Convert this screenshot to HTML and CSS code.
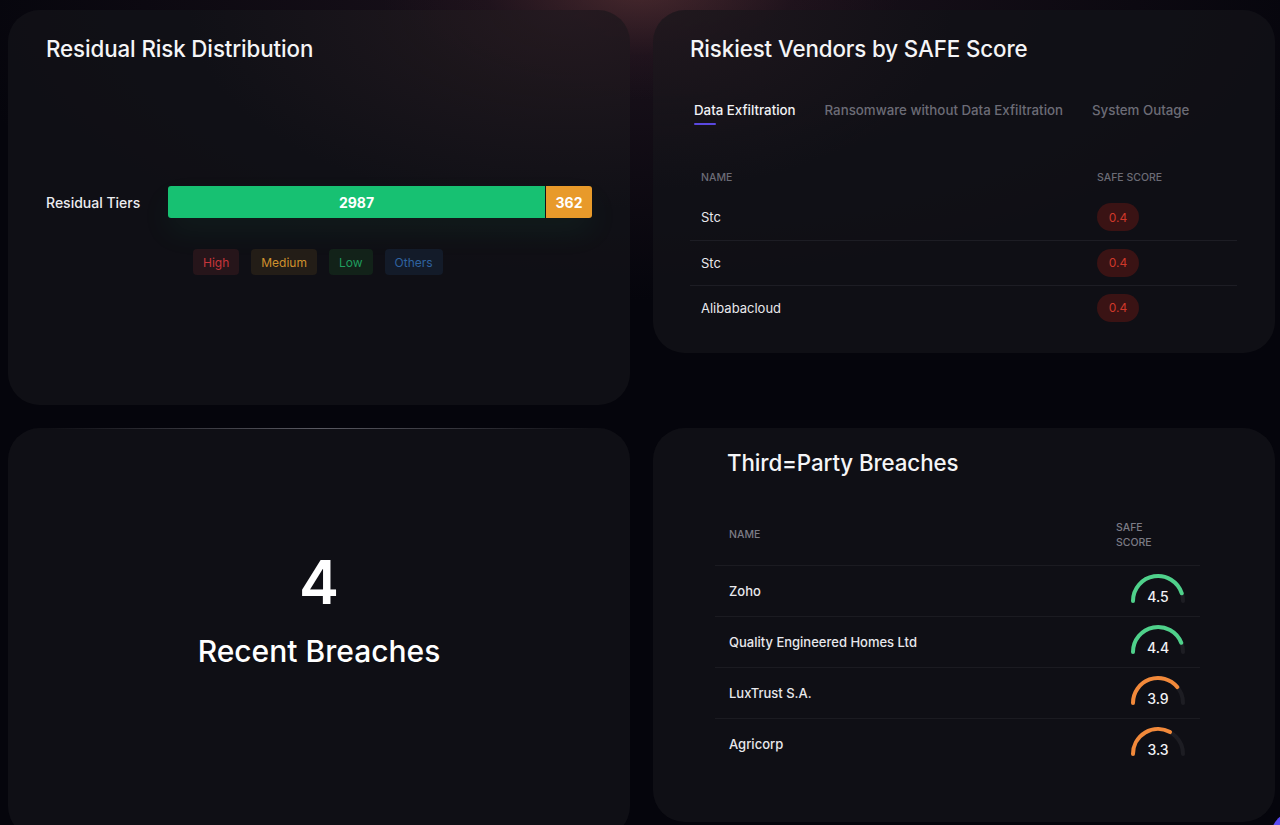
FILE: index.html
```html
<!DOCTYPE html>
<html lang="en">
<head>
<meta charset="utf-8">
<title>Risk Dashboard</title>
<link rel="stylesheet" href="styles.css">
</head>
<body>
<main class="grid">
  <section class="card card-dist">
    <h2 class="card-title">Residual Risk Distribution</h2>
    <div class="tier-row">
      <span class="tier-label">Residual Tiers</span>
      <div class="bar">
        <div class="seg seg-low" style="width: 377px">2987</div>
        <div class="seg seg-med" style="width: 46px">362</div>
      </div>
    </div>
    <div class="legend">
      <span class="chip chip-high">High</span>
      <span class="chip chip-med">Medium</span>
      <span class="chip chip-low">Low</span>
      <span class="chip chip-other">Others</span>
    </div>
  </section>

  <section class="card card-vendors">
    <h2 class="card-title">Riskiest Vendors by SAFE Score</h2>
    <nav class="tabs">
      <span class="tab active">Data Exfiltration</span>
      <span class="tab">Ransomware without Data Exfiltration</span>
      <span class="tab">System Outage</span>
    </nav>
    <table class="vtable">
      <thead>
        <tr><th class="col-name">Name</th><th class="col-score">Safe Score</th></tr>
      </thead>
      <tbody>
        <tr><td>Stc</td><td><span class="pill">0.4</span></td></tr>
        <tr><td>Stc</td><td><span class="pill">0.4</span></td></tr>
        <tr><td>Alibabacloud</td><td><span class="pill">0.4</span></td></tr>
      </tbody>
    </table>
  </section>

  <section class="card card-recent">
    <div class="big-num">4</div>
    <div class="big-label">Recent Breaches</div>
  </section>

  <section class="card card-breaches">
    <h2 class="card-title">Third=Party Breaches</h2>
    <table class="btable">
      <thead>
        <tr><th class="col-name">Name</th><th class="col-score"><span class="wrap">Safe Score</span></th></tr>
      </thead>
      <tbody>
        <tr>
          <td>Zoho</td>
          <td><div class="gauge"><svg viewBox="0 0 56 34" width="56" height="34"><path class="track" d="M3 28 A25 25 0 0 1 53 28"/><path class="val green" d="M3 28 A25 25 0 0 1 51.78 20.27"/></svg><span class="gnum">4.5</span></div></td>
        </tr>
        <tr>
          <td>Quality Engineered Homes Ltd</td>
          <td><div class="gauge"><svg viewBox="0 0 56 34" width="56" height="34"><path class="track" d="M3 28 A25 25 0 0 1 53 28"/><path class="val green" d="M3 28 A25 25 0 0 1 51.24 18.8"/></svg><span class="gnum">4.4</span></div></td>
        </tr>
        <tr>
          <td>LuxTrust S.A.</td>
          <td><div class="gauge"><svg viewBox="0 0 56 34" width="56" height="34"><path class="track" d="M3 28 A25 25 0 0 1 53 28"/><path class="val orange" d="M3 28 A25 25 0 0 1 47.26 12.06"/></svg><span class="gnum">3.9</span></div></td>
        </tr>
        <tr>
          <td>Agricorp</td>
          <td><div class="gauge"><svg viewBox="0 0 56 34" width="56" height="34"><path class="track" d="M3 28 A25 25 0 0 1 53 28"/><path class="val orange" d="M3 28 A25 25 0 0 1 40.05 6.09"/></svg><span class="gnum">3.3</span></div></td>
        </tr>
      </tbody>
    </table>
  </section>
</main>
<div class="fab"></div>
</body>
</html>
```

FILE: styles.css
```css
* { box-sizing: border-box; }

html, body {
  margin: 0;
  height: 100%;
  overflow: hidden;
}

body {
  font-family: Inter, "Noto Sans", "Liberation Sans", sans-serif;
  color: #f2f2f5;
  background:
    radial-gradient(ellipse 260px 110px at 640px -10px, rgba(110, 60, 60, 0.5), rgba(60, 30, 40, 0.2) 60%, transparent 100%),
    radial-gradient(ellipse 700px 300px at 640px 0px, rgba(45, 28, 40, 0.6), transparent 100%),
    #05050c;
}

.grid {
  display: grid;
  grid-template-columns: 622px 622px;
  column-gap: 23px;
  row-gap: 23px;
  padding: 10px 5px 0 8px;
  align-items: start;
}

.card {
  position: relative;
  border-radius: 32px;
  background: rgba(17, 17, 23, 0.88);
}

.card-title {
  margin: 0;
  font-size: 22.3px;
  font-weight: 500;
  line-height: 25px;
  color: #f5f5f7;
  letter-spacing: -0.1px;
}

/* Residual risk distribution */
.card-dist {
  height: 395px;
  padding: 26px 38px 0 38px;
  background:
    radial-gradient(ellipse 380px 200px at 560px 0px, rgba(50, 32, 38, 0.55), transparent 100%),
    rgba(17, 17, 23, 0.88);
}

.tier-row {
  display: flex;
  align-items: center;
  margin-top: 125px;
  height: 32px;
}

.tier-label {
  width: 123px;
  font-size: 14px;
  font-weight: 500;
  color: #ececf0;
}

.bar {
  display: flex;
  gap: 1px;
  height: 32px;
  margin-left: 1px;
  box-shadow: 0 14px 30px rgba(23, 193, 114, 0.07);
}

.seg {
  display: flex;
  align-items: center;
  justify-content: center;
  font-size: 14px;
  font-weight: 700;
  color: #ffffff;
}

.seg-low {
  background: #17c172;
  border-radius: 3px 0 0 3px;
}

.seg-med {
  background: #e89a2a;
  border-radius: 0 3px 3px 0;
}

.legend {
  display: flex;
  gap: 12px;
  margin: 31px 0 0 147px;
}

.chip {
  height: 26px;
  padding: 0 10px;
  display: flex;
  align-items: center;
  border-radius: 4px;
  font-size: 12px;
}

.chip-high { background: #26151a; color: #c8363a; }
.chip-med { background: #231d17; color: #d0912d; }
.chip-low { background: #122219; color: #1f9d5e; }
.chip-other { background: #131b29; color: #2f63a0; }

/* Vendors */
.card-vendors {
  height: 343px;
  padding: 26px 38px 0 37px;
  background:
    radial-gradient(ellipse 300px 180px at 0px 0px, rgba(45, 30, 36, 0.5), transparent 100%),
    rgba(17, 17, 23, 0.88);
}

.tabs {
  display: flex;
  gap: 29px;
  margin-top: 40px;
  padding-left: 4px;
}

.tab {
  position: relative;
  font-size: 13.3px;
  font-weight: 500;
  line-height: 18px;
  color: #6c6c76;
}

.tab.active { color: #f2f2f5; }

.tab.active::after {
  content: "";
  position: absolute;
  left: 0;
  top: 22px;
  width: 22px;
  height: 2px;
  border-radius: 1px;
  background: #5a48e0;
}

.vtable, .btable {
  border-collapse: collapse;
  width: 100%;
}

.vtable {
  margin-top: 40px;
  width: 547px;
}

.vtable th {
  height: 36px;
  padding: 0 0 0 11px;
  text-align: left;
  font-size: 10.5px;
  font-weight: 500;
  text-transform: uppercase;
  color: #6c6c76;
}

.vtable .col-score { width: 140px; padding-left: 0; }

.vtable td {
  height: 45px;
  padding: 0 0 0 11px;
  font-size: 13px;
  font-weight: 400;
  color: #e8e8ec;
}

.vtable td:last-child { padding-left: 0; }

.vtable tbody tr + tr td { border-top: 1px solid #1d1d24; }

.pill {
  display: inline-flex;
  align-items: center;
  justify-content: center;
  width: 42px;
  height: 28px;
  border-radius: 14px;
  background: #3a1314;
  color: #d0382a;
  font-size: 12px;
}

/* Recent breaches */
.card-recent {
  height: 410px;
  padding-top: 124px;
  display: flex;
  flex-direction: column;
  align-items: center;
}

.card-recent::before {
  content: "";
  position: absolute;
  top: 0;
  left: 40px;
  right: 40px;
  height: 1px;
  background: linear-gradient(90deg, transparent, rgba(140, 140, 150, 0.6) 50%, transparent);
}

.big-num {
  font-size: 60px;
  font-weight: 600;
  line-height: 60px;
  color: #ffffff;
}

.big-label {
  margin-top: 21px;
  font-size: 30px;
  font-weight: 500;
  line-height: 36px;
  color: #ffffff;
}

/* Third-party breaches */
.card-breaches {
  height: 394px;
  padding: 22px 75px 0 62px;
}

.card-breaches .card-title { padding-left: 12px; }

.btable { margin-top: 30px; }

.btable th {
  height: 60px;
  padding: 0 0 0 14px;
  text-align: left;
  font-size: 10.5px;
  font-weight: 500;
  line-height: 15px;
  text-transform: uppercase;
  color: #7c7c86;
  border-bottom: 1px solid #1b1b21;
}

.btable .col-score { width: 98px; }

.btable .wrap { display: block; width: 50px; }

.btable td {
  height: 51px;
  padding: 0 0 0 14px;
  font-size: 13px;
  font-weight: 500;
  color: #e8e8ec;
  border-bottom: 1px solid #1b1b21;
}

.btable tbody tr:last-child td { border-bottom: none; }

.gauge {
  position: relative;
  width: 56px;
  height: 34px;
  margin: 0 0 1px 14px;
}

.gauge svg { display: block; }

.track, .val {
  fill: none;
  stroke-width: 4;
  stroke-linecap: round;
}

.track { stroke: #1d1d23; }
.val.green { stroke: #4fd18b; }
.val.orange { stroke: #f2893a; }

.gnum {
  position: absolute;
  left: 0;
  right: 0;
  top: 15px;
  text-align: center;
  font-size: 14px;
  line-height: 17px;
  font-weight: 500;
  color: #f2f2f5;
}

.fab {
  position: fixed;
  right: -46px;
  bottom: -41px;
  width: 56px;
  height: 56px;
  border-radius: 50%;
  background: #5a4af0;
}
```
